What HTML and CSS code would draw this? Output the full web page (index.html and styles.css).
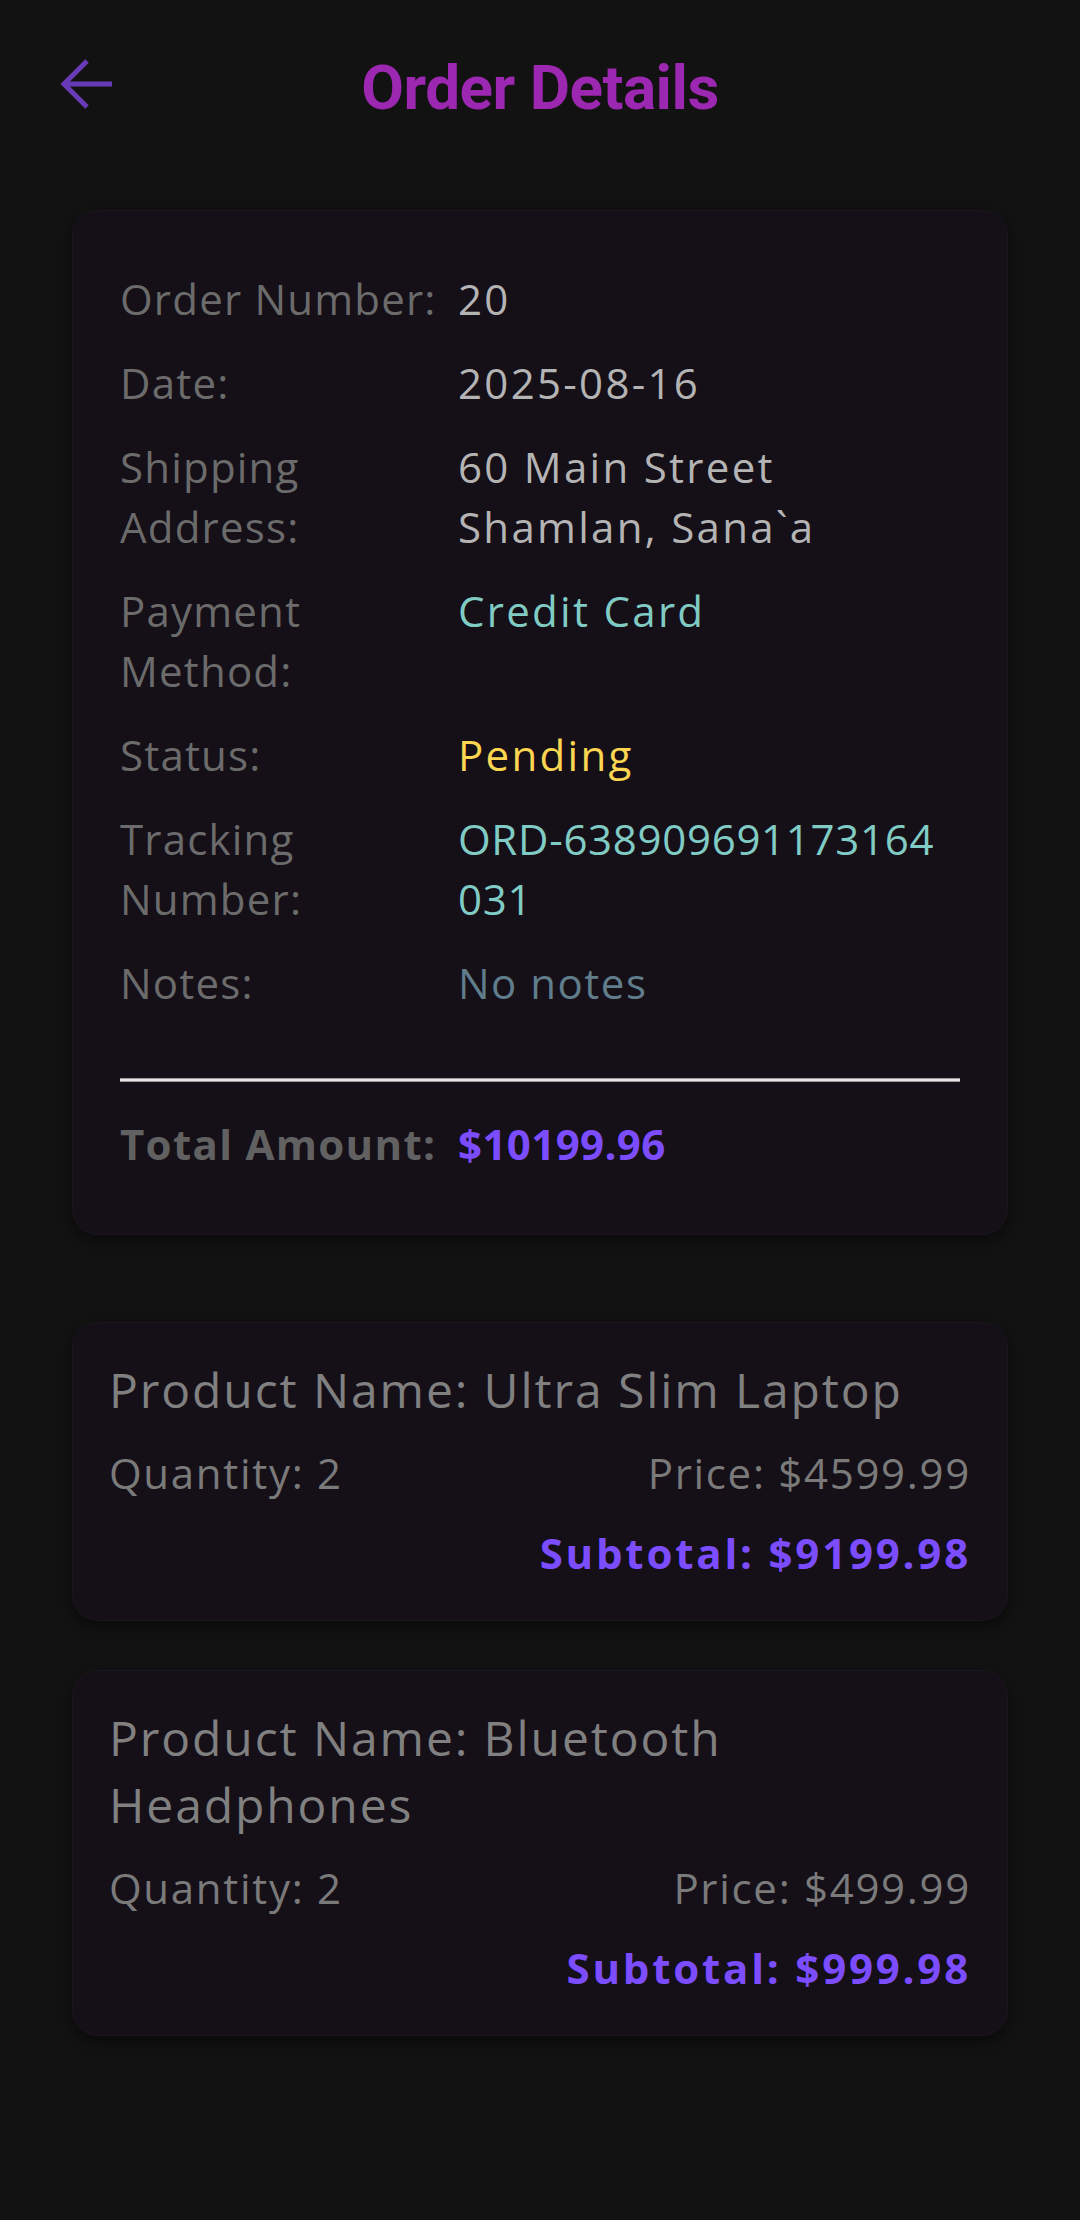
FILE: index.html
```html
<!DOCTYPE html>
<html lang="en">
<head>
<meta charset="utf-8">
<title>Order Details</title>
<link rel="stylesheet" href="styles.css">
</head>
<body>
<header class="appbar">
  <button class="back" aria-label="Back">
    <svg width="56" height="56" viewBox="0 0 56 56" fill="none">
      <path d="M56 28H9" stroke="currentColor" stroke-width="5"/>
      <path d="M31 5L8 28L31 51" stroke="currentColor" stroke-width="5"/>
    </svg>
  </button>
  <h1 class="title">Order Details</h1>
</header>
<main class="content">
  <section class="card summary">
    <div class="row"><span class="label">Order Number:</span><span class="value">20</span></div>
    <div class="row"><span class="label">Date:</span><span class="value">2025-08-16</span></div>
    <div class="row"><span class="label">Shipping Address:</span><span class="value">60 Main Street<br>Shamlan, Sana`a</span></div>
    <div class="row"><span class="label">Payment Method:</span><span class="value teal">Credit Card</span></div>
    <div class="row"><span class="label">Status:</span><span class="value yellow">Pending</span></div>
    <div class="row"><span class="label">Tracking Number:</span><span class="value teal tracking">ORD-638909691173164<wbr>031</span></div>
    <div class="row"><span class="label">Notes:</span><span class="value slate">No notes</span></div>
    <hr class="divider">
    <div class="row total"><span class="label">Total Amount:</span><span class="value accent">$10199.96</span></div>
  </section>

  <section class="card item">
    <div class="item-name">Product Name: Ultra Slim Laptop</div>
    <div class="item-meta"><span>Quantity: 2</span><span>Price: $4599.99</span></div>
    <div class="subtotal">Subtotal: $9199.98</div>
  </section>

  <section class="card item">
    <div class="item-name">Product Name: Bluetooth Headphones</div>
    <div class="item-meta"><span>Quantity: 2</span><span>Price: $499.99</span></div>
    <div class="subtotal">Subtotal: $999.98</div>
  </section>
</main>
</body>
</html>
```

FILE: styles.css
```css
* { box-sizing: border-box; }

html, body {
  margin: 0;
  padding: 0;
  background: #121212;
}

body {
  width: 1080px;
  min-height: 2220px;
  font-family: "Open Sans", "Noto Sans", sans-serif;
  color: #bdbdbd;
}

.appbar {
  position: relative;
  height: 170px;
  display: flex;
  align-items: center;
  justify-content: center;
}

.back {
  position: absolute;
  left: 56px;
  top: 56px;
  width: 56px;
  height: 56px;
  padding: 0;
  border: 0;
  background: transparent;
  color: #673ab7;
  display: flex;
  align-items: center;
  justify-content: center;
}

.title {
  margin: 6px 0 0;
  font-family: Roboto, "Noto Sans", sans-serif;
  font-weight: 700;
  font-size: 62px;
  line-height: 74px;
  color: #9c27b0;
  letter-spacing: -0.5px;
}

.content {
  padding: 40px 72px 0;
  display: flex;
  flex-direction: column;
}

.card {
  background: #150f18;
  border: 1px solid #1b1520;
  border-radius: 26px;
  box-shadow: 0 6px 14px rgba(0, 0, 0, 0.45);
}

.summary {
  padding: 46px 47px 48px;
  margin-bottom: 87px;
}

.row {
  display: grid;
  grid-template-columns: 330px 1fr;
  column-gap: 8px;
  padding: 12px 0;
  font-size: 42px;
  line-height: 60px;
}

.label {
  color: #6b6b6b;
  letter-spacing: 1.2px;
}

.value {
  color: #b4b4b4;
  letter-spacing: 2.3px;
}

.teal { color: #80cbc4; }
.yellow { color: #fdd651; }
.slate { color: #607d8b; letter-spacing: 1.5px; }
.accent { color: #7c4dff; }

.tracking {
  letter-spacing: 0.7px;
  hyphens: none;
}

.divider {
  margin: 53px 0 20px;
  height: 4px;
  border: 0;
  background: #e6e6e6;
  border-top: 1px solid #9a9a9a;
  border-bottom: 1px solid #9a9a9a;
}

.total {
  font-weight: 700;
}

.total .label {
  color: #616161;
  letter-spacing: 1.3px;
}

.total .value {
  letter-spacing: 0.4px;
}

.item {
  padding: 33px 36px 37px;
  margin-bottom: 49px;
  display: flex;
  flex-direction: column;
  gap: 20px;
}

.item-name {
  font-size: 48px;
  line-height: 67px;
  color: #808080;
  letter-spacing: 1.9px;
}

.item-meta {
  display: flex;
  justify-content: space-between;
  font-size: 42px;
  line-height: 60px;
  color: #7a7a7a;
  letter-spacing: 1.7px;
}

.subtotal {
  text-align: right;
  font-size: 42px;
  line-height: 60px;
  font-weight: 700;
  color: #7c4dff;
  letter-spacing: 2.8px;
}
```
